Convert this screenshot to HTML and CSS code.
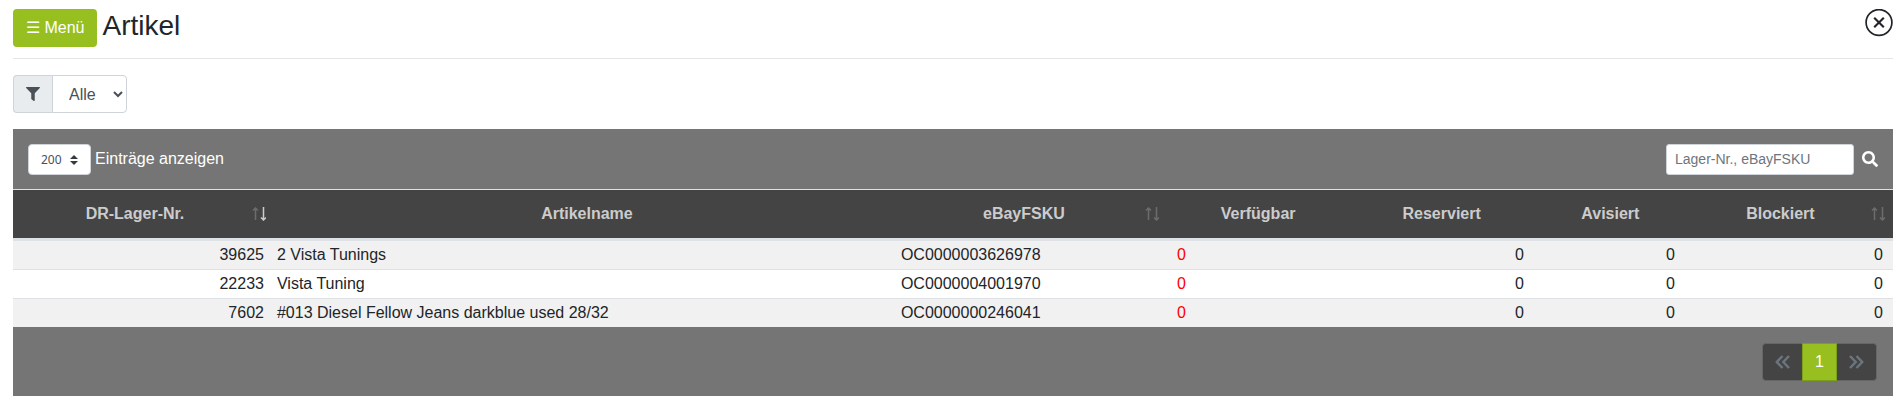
FILE: index.html
```html
<!DOCTYPE html>
<html lang="de">
<head>
    <meta charset="UTF-8">
    <meta name="viewport" content="width=device-width, initial-scale=1.0">
    <title>Artikel</title>
    <link rel="stylesheet" href="styles.css">
</head>
<body>
<header class="page-header">
    <button type="button" class="btn-menu">☰ Menü</button>
    <h1>Artikel</h1>
    <button type="button" class="btn-close" aria-label="Schließen">
        <svg viewBox="0 0 28 28" width="28" height="28" fill="none" stroke="#212529">
            <circle cx="14" cy="13.5" r="12.9" stroke-width="1.7"/>
            <path d="M9.200 8.700l9.600 9.600M18.800 8.700l-9.600 9.600" stroke-width="2.1"/>
        </svg>
    </button>
</header>

<div class="filter">
    <label class="filter-icon" for="filter" aria-label="Filter">
        <svg viewBox="0 0 512 512" width="14" height="14" fill="currentColor">
            <path d="M488 0H24C3 0-8 26 7 41l185 185v206c0 8 4 15 10 20l80 56c16 11 38 0 38-20V226L505 41c15-15 4-41-17-41z"/>
        </svg>
    </label>
    <select id="filter" name="filter">
        <option>Alle</option>
    </select>
</div>

<main class="panel">
    <div class="toolbar">
        <label class="length">
            <span class="length-select">
                <select name="length">
                    <option>200</option>
                </select>
                <svg viewBox="0 0 8 10" width="8" height="10" fill="#343a40">
                    <path d="M4 0L0 4h8zM4 10L0 6h8z"/>
                </svg>
            </span>
            Einträge anzeigen
        </label>
        <div class="search">
            <input type="search" name="search" placeholder="Lager-Nr., eBayFSKU" aria-label="Suche">
            <svg viewBox="0 0 512 512" width="16" height="16" fill="#fff">
                <path d="M505 442.700L405.300 343c-4.500-4.500-10.600-7-17-7H372c27.600-35.300 44-79.700 44-128C416 93.100 322.900 0 208 0S0 93.100 0 208s93.100 208 208 208c48.300 0 92.700-16.400 128-44v16.300c0 6.400 2.500 12.500 7 17l99.700 99.700c9.400 9.400 24.600 9.400 33.900 0l28.300-28.300c9.400-9.400 9.400-24.600.1-34zM208 336c-70.700 0-128-57.200-128-128 0-70.700 57.200-128 128-128 70.700 0 128 57.200 128 128 0 70.700-57.200 128-128 128z"/>
            </svg>
        </div>
    </div>

    <table class="articles">
        <colgroup>
            <col class="col-stock">
            <col class="col-name">
            <col class="col-sku">
            <col class="col-available">
            <col class="col-reserved">
            <col class="col-advised">
            <col class="col-blocked">
        </colgroup>
        <thead>
        <tr>
            <th class="sortable sort-desc">
                DR-Lager-Nr.
                <svg class="sort" viewBox="0 0 14 14" width="14" height="14">
                    <path class="up" d="M3.500 13V1M1 3.500L3.500 1 6 3.500"/>
                    <path class="down" d="M11.500 0v12.500M9 10.500l2.500 2.500 2.500-2.500"/>
                </svg>
            </th>
            <th>Artikelname</th>
            <th class="sortable">
                eBayFSKU
                <svg class="sort" viewBox="0 0 14 14" width="14" height="14">
                    <path class="up" d="M3.500 13V1M1 3.500L3.500 1 6 3.500"/>
                    <path class="down" d="M11.500 0v12.500M9 10.500l2.500 2.500 2.500-2.500"/>
                </svg>
            </th>
            <th>Verfügbar</th>
            <th>Reserviert</th>
            <th>Avisiert</th>
            <th class="sortable">
                Blockiert
                <svg class="sort" viewBox="0 0 14 14" width="14" height="14">
                    <path class="up" d="M3.500 13V1M1 3.500L3.500 1 6 3.500"/>
                    <path class="down" d="M11.500 0v12.500M9 10.500l2.500 2.500 2.500-2.500"/>
                </svg>
            </th>
        </tr>
        </thead>
        <tbody>
        <tr>
            <td class="num">39625</td>
            <td>2 Vista Tunings</td>
            <td>OC0000003626978</td>
            <td class="empty">0</td>
            <td class="num">0</td>
            <td class="num">0</td>
            <td class="num">0</td>
        </tr>
        <tr>
            <td class="num">22233</td>
            <td>Vista Tuning</td>
            <td>OC0000004001970</td>
            <td class="empty">0</td>
            <td class="num">0</td>
            <td class="num">0</td>
            <td class="num">0</td>
        </tr>
        <tr>
            <td class="num">7602</td>
            <td>#013 Diesel Fellow Jeans darkblue used 28/32</td>
            <td>OC0000000246041</td>
            <td class="empty">0</td>
            <td class="num">0</td>
            <td class="num">0</td>
            <td class="num">0</td>
        </tr>
        </tbody>
    </table>

    <nav class="pagination" aria-label="Seiten">
        <button type="button" disabled aria-label="Zurück">
            <svg viewBox="0 0 15 14" width="15" height="14" fill="none" stroke="currentColor" stroke-width="2.500">
                <path d="M7.500 1L1.800 7l5.700 6M14 1L8.300 7l5.700 6"/>
            </svg>
        </button>
        <button type="button" class="active">1</button>
        <button type="button" disabled aria-label="Weiter">
            <svg viewBox="0 0 15 14" width="15" height="14" fill="none" stroke="currentColor" stroke-width="2.500">
                <path d="M1 1l5.700 6L1 13M7.500 1l5.700 6-5.700 6"/>
            </svg>
        </button>
    </nav>
</main>
</body>
</html>
```

FILE: styles.css
```css
* {
    box-sizing: border-box;
}

body {
    margin: 0;
    padding: 9px 11px 12px 13px;
    background-color: #fff;
    color: #212529;
    font-family: "Liberation Sans", Arial, sans-serif;
    font-size: 16px;
    line-height: 24px;
}

button, select, input {
    font-family: inherit;
    font-size: 16px;
}

.page-header {
    display: flex;
    align-items: flex-start;
    gap: 5px;
    height: 50px;
    border-bottom: 1px solid #e5e5e5;
}

.btn-menu {
    height: 38px;
    padding: 0 13px 2px;
    border: none;
    border-radius: 4px;
    background-color: #97bf1f;
    color: #fff;
    cursor: pointer;
}

h1 {
    margin: 0;
    font-size: 28px;
    font-weight: 400;
    line-height: 34px;
}

.btn-close {
    display: flex;
    margin-left: auto;
    padding: 0;
    border: none;
    background: none;
    cursor: pointer;
}

.filter {
    display: flex;
    margin: 16px 0;
}

.filter-icon {
    display: flex;
    align-items: center;
    height: 38px;
    padding: 0 12px;
    border: 1px solid #ced4da;
    border-right: none;
    border-radius: 4px 0 0 4px;
    background-color: #e9ecef;
    color: #495057;
}

.filter select {
    width: 75px;
    height: 38px;
    padding: 0 0 0 12px;
    border: 1px solid #ced4da;
    border-radius: 0 4px 4px 0;
    background-color: #fff;
    color: #495057;
}

.panel {
    background-color: #757575;
}

.toolbar {
    display: flex;
    align-items: center;
    justify-content: space-between;
    height: 60px;
    padding: 0 15px;
}

.length {
    display: flex;
    align-items: center;
    gap: 4px;
    color: #fff;
}

.length-select {
    display: flex;
    position: relative;
}

.length-select select {
    width: 63px;
    height: 31px;
    padding: 0 12px;
    border: 1px solid #ced4da;
    border-radius: 4px;
    appearance: none;
    background-color: #fff;
    color: #495057;
    font-family: "Noto Sans", sans-serif;
    font-size: 12px;
}

/* double caret over the select */
.length-select svg {
    position: absolute;
    top: 11px;
    right: 13px;
    pointer-events: none;
}

.search {
    display: flex;
    align-items: center;
    gap: 8px;
}

.search input {
    width: 188px;
    height: 31px;
    padding: 0 8px;
    border: 1px solid #ced4da;
    border-radius: 3px;
    font-size: 14px;
}

.search input::placeholder {
    color: #6c757d;
}

.articles {
    width: 100%;
    table-layout: fixed;
    border-collapse: separate;
    border-spacing: 0;
}

.col-stock { width: 13.88%; }
.col-name { width: 33.19%; }
.col-sku { width: 14.31%; }
.col-available { width: 9.6%; }
.col-reserved { width: 9.92%; }
.col-advised { width: 8.03%; }
.col-blocked { width: 11.07%; }

.articles th {
    padding: 12px 8px 12px 10px;
    border-top: 1px solid #dee2e6;
    border-bottom: 2px solid #dee2e6;
    background-color: #444;
    color: #ccc;
}

.articles .sortable {
    position: relative;
    padding-right: 27px;
}

.sort {
    position: absolute;
    top: 17px;
    right: 8px;
    fill: none;
    stroke: #6c6c6c;
    stroke-width: 1.5;
}

.sort-desc .down {
    stroke: #ccc;
}

.articles td {
    padding: 2px 10px 2px 3px;
    border-top: 1px solid #dee2e6;
    background-color: #fff;
}

.articles tbody tr:nth-child(odd) td {
    background-color: #f1f1f1;
}

.articles .num {
    text-align: right;
}

.articles .empty {
    padding-left: 10px;
    color: #f00;
}

.pagination {
    display: flex;
    justify-content: flex-end;
    padding: 16px 16px 15px;
}

.pagination button {
    display: flex;
    align-items: center;
    height: 38px;
    padding: 0 12px;
    border: 1px solid #666;
    background-color: #444;
    color: #6c757d;
}

.pagination button:first-child {
    border-right: none;
    border-radius: 4px 0 0 4px;
}

.pagination button:last-child {
    border-left: none;
    border-radius: 0 4px 4px 0;
}

.pagination .active {
    border-color: #7da019;
    background-color: #97bf1f;
    color: #fff;
}
```
